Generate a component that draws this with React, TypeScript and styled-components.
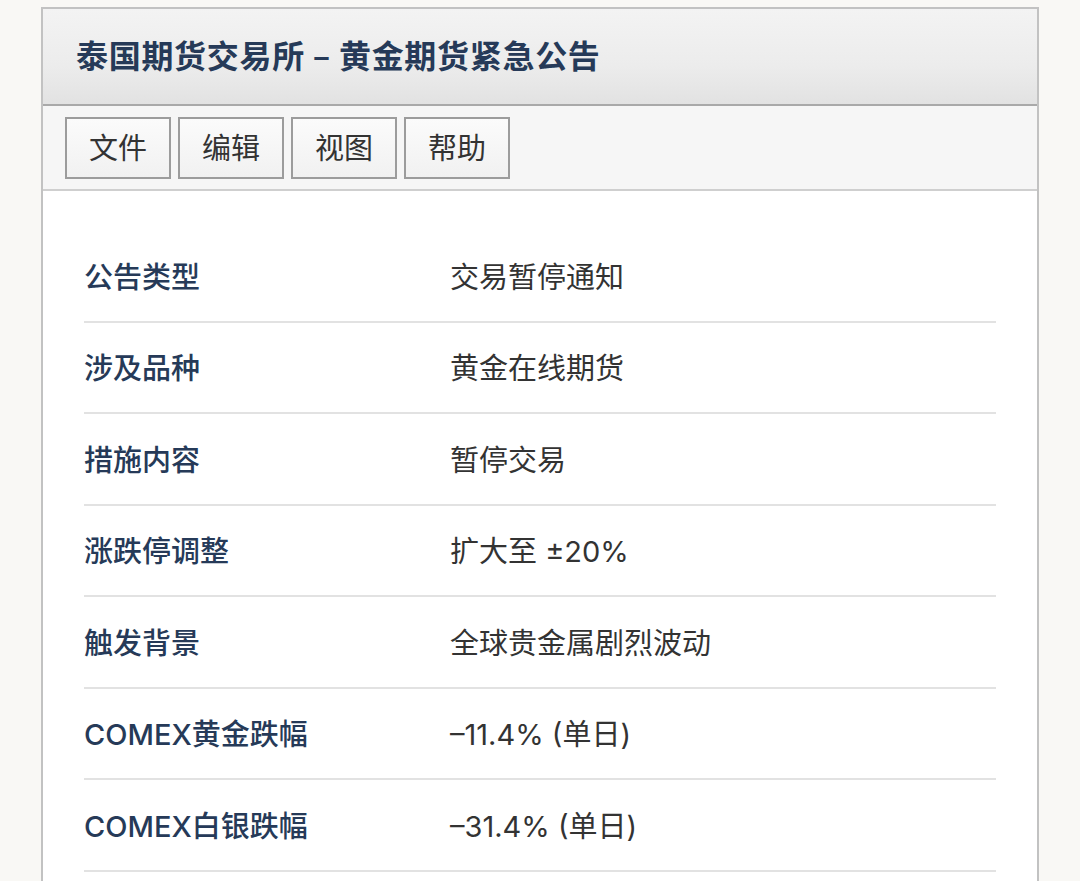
import React from "react";
import styled, { createGlobalStyle } from "styled-components";

const GlobalStyle = createGlobalStyle`
  html, body {
    margin: 0;
    padding: 0;
    background: #f9f8f5;
  }
  body {
    font-family: "Inter", "Noto Sans CJK SC", sans-serif;
  }
`;

const Page = styled.div`
  padding: 7px 41px 0 41px;
  height: 881px;
  box-sizing: border-box;
  display: flex;
  flex-direction: column;
  overflow: hidden;
`;

const Panel = styled.div`
  flex: 1;
  border: 2px solid #c2c2c2;
  border-bottom: none;
  background: #ffffff;
  width: 998px;
  box-sizing: border-box;
`;

const Header = styled.div`
  height: 97px;
  box-sizing: border-box;
  display: flex;
  align-items: center;
  padding: 0 0 6px 33px;
  background: linear-gradient(to bottom, #f3f3f3 0%, #ececec 60%, #e2e2e2 100%);
  border-bottom: 2px solid #a9a9a9;
`;

const Title = styled.h1`
  margin: 0;
  font-family: "Noto Sans CJK SC", sans-serif;
  font-size: 32px;
  font-weight: 700;
  color: #263a58;
  letter-spacing: 0.7px;
`;

const Toolbar = styled.div`
  display: flex;
  gap: 7px;
  padding: 11px 21px 10px 22px;
  background: #f6f6f6;
  border-bottom: 2px solid #cfcfcf;
`;

const MenuButton = styled.button`
  width: 106px;
  height: 62px;
  box-sizing: border-box;
  border: 2px solid #9c9c9c;
  background: linear-gradient(to bottom, #fbfbfb 0%, #f1f1f1 100%);
  font-family: "Noto Sans CJK SC", sans-serif;
  font-size: 29px;
  line-height: 1;
  color: #333333;
  padding: 0 0 3px 0;
  display: flex;
  align-items: center;
  justify-content: center;
`;

const Body = styled.div`
  padding: 40px 41px 0 41px;
`;

const Row = styled.div`
  display: grid;
  grid-template-columns: 366px 1fr;
  align-items: center;
  height: 91.5px;
  box-sizing: border-box;
  border-bottom: 2px solid #e2e2e2;
  padding-bottom: 2px;
`;

const Label = styled.div`
  font-family: "Inter", "Noto Sans CJK SC", sans-serif;
  font-size: 29px;
  font-weight: 500;
  color: #263a58;
`;

const Value = styled.div`
  font-family: "Inter", "Noto Sans CJK SC", sans-serif;
  font-size: 29px;
  font-weight: 400;
  color: #333333;
`;

const rows: [string, string][] = [
  ["公告类型", "交易暂停通知"],
  ["涉及品种", "黄金在线期货"],
  ["措施内容", "暂停交易"],
  ["涨跌停调整", "扩大至 ±20%"],
  ["触发背景", "全球贵金属剧烈波动"],
  ["COMEX黄金跌幅", "–11.4% (单日)"],
  ["COMEX白银跌幅", "–31.4% (单日)"],
];

export default function App() {
  return (
    <>
      <GlobalStyle />
      <Page>
        <Panel>
          <Header>
            <Title>泰国期货交易所 – 黄金期货紧急公告</Title>
          </Header>
          <Toolbar>
            {["文件", "编辑", "视图", "帮助"].map((m) => (
              <MenuButton key={m}>{m}</MenuButton>
            ))}
          </Toolbar>
          <Body>
            {rows.map(([k, v]) => (
              <Row key={k}>
                <Label>{k}</Label>
                <Value>{v}</Value>
              </Row>
            ))}
          </Body>
        </Panel>
      </Page>
    </>
  );
}
